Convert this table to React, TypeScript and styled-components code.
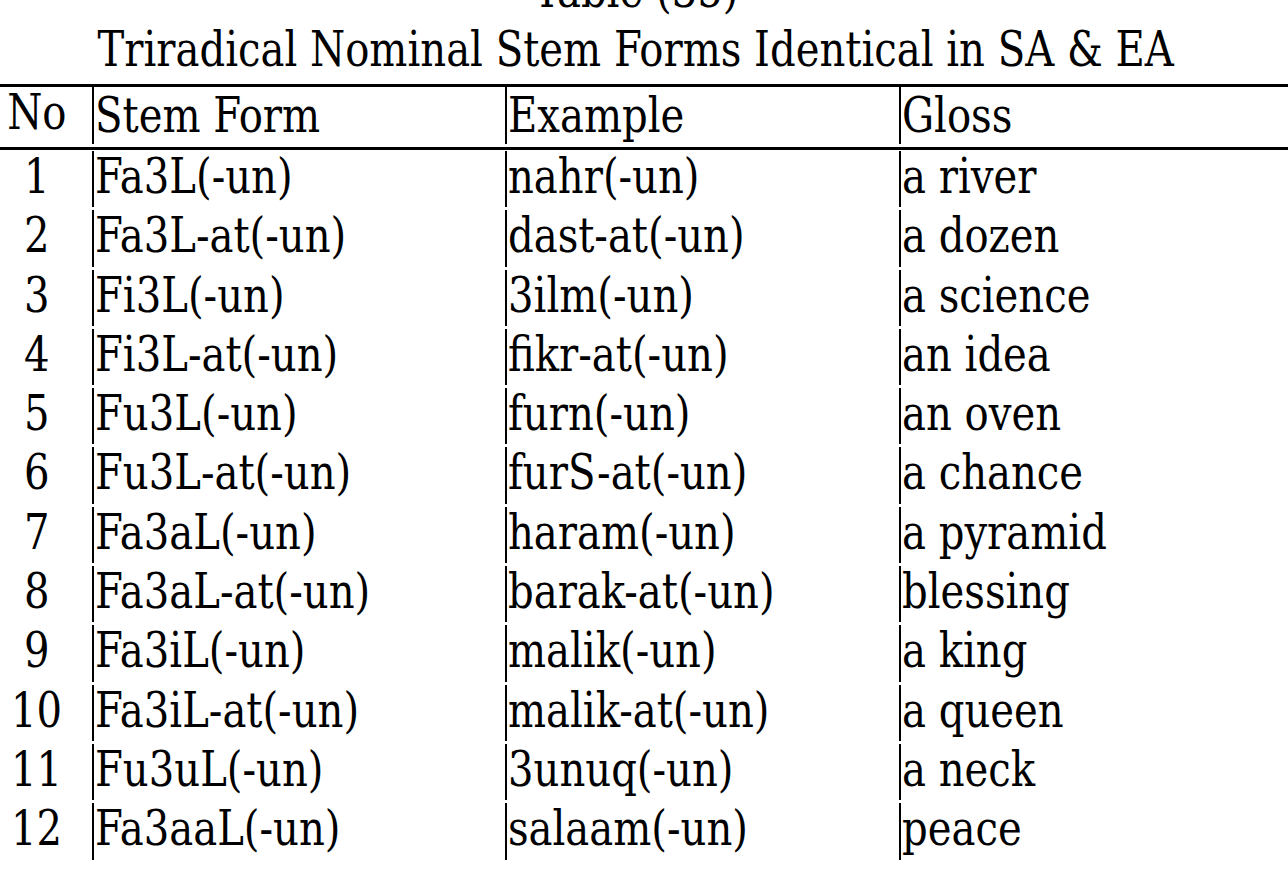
import React from 'react'
import styled, { createGlobalStyle } from 'styled-components'

const GlobalStyle = createGlobalStyle`
  html, body {
    margin: 0;
    padding: 0;
    background: #ffffff;
    overflow: hidden;
  }
  body {
    font-family: "DejaVu Serif Condensed", "DejaVu Serif", serif;
    font-stretch: condensed;
    color: #000;
  }
`

const rows = [
  ['1', 'Fa3L(-un)', 'nahr(-un)', 'a river'],
  ['2', 'Fa3L-at(-un)', 'dast-at(-un)', 'a dozen'],
  ['3', 'Fi3L(-un)', '3ilm(-un)', 'a science'],
  ['4', 'Fi3L-at(-un)', 'fikr-at(-un)', 'an idea'],
  ['5', 'Fu3L(-un)', 'furn(-un)', 'an oven'],
  ['6', 'Fu3L-at(-un)', 'furS-at(-un)', 'a chance'],
  ['7', 'Fa3aL(-un)', 'haram(-un)', 'a pyramid'],
  ['8', 'Fa3aL-at(-un)', 'barak-at(-un)', 'blessing'],
  ['9', 'Fa3iL(-un)', 'malik(-un)', 'a king'],
  ['10', 'Fa3iL-at(-un)', 'malik-at(-un)', 'a queen'],
  ['11', 'Fu3uL(-un)', '3unuq(-un)', 'a neck'],
  ['12', 'Fa3aaL(-un)', 'salaam(-un)', 'peace'],
]

const App = () => {
  return (
    <Page>
      <GlobalStyle />
      <Caption>
        <CaptionLine><Narrow $origin="center">Table (35)</Narrow></CaptionLine>
        <CaptionLine>
          <Narrow $origin="center">Triradical Nominal Stem Forms Identical in SA &amp; EA</Narrow>
        </CaptionLine>
      </Caption>
      <Table>
        <HeadRow>
          <NumCell><Narrow $origin="center">No</Narrow></NumCell>
          <HeadCell><Narrow>Stem Form</Narrow></HeadCell>
          <HeadCell><Narrow>Example</Narrow></HeadCell>
          <HeadCell><Narrow>Gloss</Narrow></HeadCell>
        </HeadRow>
        {rows.map((r) => (
          <BodyRow key={r[0]}>
            <NumCell><Narrow $origin="center">{r[0]}</Narrow></NumCell>
            <Cell><Narrow>{r[1]}</Narrow></Cell>
            <Cell><Narrow>{r[2]}</Narrow></Cell>
            <Cell><Narrow>{r[3]}</Narrow></Cell>
          </BodyRow>
        ))}
      </Table>
    </Page>
  )
}

export default App

const Page = styled.div`
  width: 1288px;
  height: 884px;
  overflow: hidden;
  font-size: 48px;
`

// the source face is a condensed serif, squeeze DejaVu Serif to its width
const Narrow = styled.span<{ $origin?: string }>`
  display: inline-block;
  transform: scaleX(0.93);
  transform-origin: ${(p) => p.$origin || 'left'} center;
`

const Caption = styled.div`
  width: 1272px;
  margin-top: -39px;
  text-align: center;
`

const CaptionLine = styled.div`
  line-height: 59px;
  white-space: nowrap;
`

const Table = styled.div`
  margin-top: 5px;
  width: 1400px;
  border-top: 3px solid #000;
`

const rowGrid = `
  display: grid;
  grid-template-columns: 92px 413px 394px 1fr;
  align-items: start;
`

const HeadRow = styled.div`
  ${rowGrid}
  height: 57px;
  padding-bottom: 3px;
  border-bottom: 3px solid #000;
  margin-bottom: 1px;
`

const BodyRow = styled.div`
  ${rowGrid}
  height: 56.3px;
  padding-bottom: 3px;
`

const NumCell = styled.div`
  height: 100%;
  line-height: 51px;
  text-align: center;
  padding-right: 19px;
  white-space: nowrap;
`

const Cell = styled.div`
  height: 100%;
  line-height: 51px;
  border-left: 2px solid #000;
  padding-left: 1px;
  white-space: nowrap;
`

const HeadCell = styled(Cell)`
  line-height: 56px;
`
